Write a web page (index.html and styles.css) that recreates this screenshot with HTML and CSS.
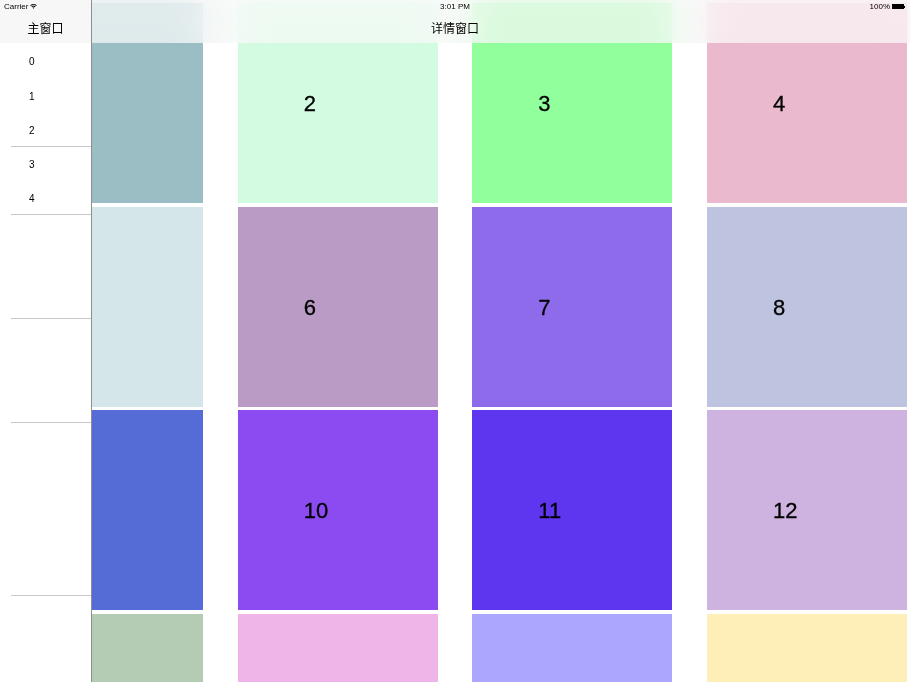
FILE: index.html
```html
<!doctype html>
<html lang="zh">
<head>
    <meta charset="utf-8" />
    <title>详情窗口</title>
    <link rel="stylesheet" href="styles.css">
</head>
<body>
    <div class="ipad">
        <div class="detail">
            <div class="grid">
                <div class="cell c1"></div>
                <div class="cell c2"><span>2</span></div>
                <div class="cell c3"><span>3</span></div>
                <div class="cell c4"><span>4</span></div>
                <div class="cell c5"></div>
                <div class="cell c6"><span>6</span></div>
                <div class="cell c7"><span>7</span></div>
                <div class="cell c8"><span>8</span></div>
                <div class="cell c9"></div>
                <div class="cell c10"><span>10</span></div>
                <div class="cell c11"><span>11</span></div>
                <div class="cell c12"><span>12</span></div>
                <div class="cell c13"></div>
                <div class="cell c14"></div>
                <div class="cell c15"></div>
                <div class="cell c16"></div>
            </div>
            <div class="detail-bar">
                <div class="status">
                    <span class="time">3:01 PM</span>
                    <span class="battery">100%<i class="cell-body"></i><i class="nub"></i></span>
                </div>
                <div class="title">详情窗口</div>
            </div>
        </div>

        <div class="master">
            <div class="master-bar">
                <div class="status">
                    <span class="carrier">Carrier</span>
                    <svg class="wifi" width="7" height="5" viewBox="0 0 7 5">
                        <path d="M0.2 1.4 A4.6 4.6 0 0 1 6.8 1.4 L6.1 2.1 A3.6 3.6 0 0 0 0.9 2.1 Z" fill="#000"/>
                        <path d="M1.4 2.6 A3 3 0 0 1 5.6 2.6 L4.9 3.3 A2 2 0 0 0 2.1 3.3 Z" fill="#000"/>
                        <path d="M2.6 3.8 A1.3 1.3 0 0 1 4.4 3.8 L3.5 4.8 Z" fill="#000"/>
                    </svg>
                </div>
                <div class="title">主窗口</div>
            </div>
            <ul class="list">
                <li class="r36">0</li>
                <li class="r34">1</li>
                <li class="r34 sep">2</li>
                <li class="r34">3</li>
                <li class="r34 sep">4</li>
                <li class="r104 sep"></li>
                <li class="r104 sep"></li>
                <li class="r173 sep"></li>
                <li class="r104"></li>
            </ul>
        </div>
    </div>
</body>
</html>
```

FILE: styles.css
```css
*{ padding:0; margin:0; list-style:none; border:0; box-sizing:border-box;}
body
{
    background:#fff;
    font-family:"Liberation Sans", Arial, "Noto Sans CJK SC", sans-serif;
    color:#000;
}
.ipad
{
    width:910px;
    height:682px;
    overflow:hidden;
    position:relative;
}

/* detail pane, runs under the master */
.detail
{
    width:910px;
    height:682px;
    overflow:hidden;
}
.grid
{
    display:grid;
    grid-template-columns:repeat(4, 200px);
    grid-auto-rows:200px;
    column-gap:34.67px;
    row-gap:3.5px;
    padding:3px 0 0 3px;
}
.cell
{
    display:flex;
    align-items:center;
    padding-left:66px;
    padding-top:2px;
    font-size:22px;
    -webkit-text-stroke:0.3px #000;
}
.c1 { background:#9bbec4; }
.c2 { background:#d3fbe1; }
.c3 { background:#90ff9c; }
.c4 { background:#ebb9cd; }
.c5 { background:#d5e6eb; }
.c6 { background:#b99bc5; }
.c7 { background:#8d6beb; }
.c8 { background:#bec4e0; }
.c9 { background:#556bd5; }
.c10 { background:#8c4bf1; }
.c11 { background:#5f36f0; }
.c12 { background:#ceb2e0; }
.c13 { background:#b4cbb4; }
.c14 { background:#efb4e8; }
.c15 { background:#aca6ff; }
.c16 { background:#feeeb8; }

.detail-bar
{
    position:absolute;
    left:0;
    top:0;
    width:910px;
    height:43px;
    background:rgba(248,248,248,0.74);
    backdrop-filter:blur(18px) saturate(1.3);
}
.status
{
    height:13px;
    font-size:8px;
    line-height:13px;
    position:relative;
}
.detail-bar .time
{
    display:block;
    text-align:center;
}
.battery
{
    position:absolute;
    right:5px;
    top:0;
    display:flex;
    align-items:center;
    height:13px;
}
.battery .cell-body
{
    display:block;
    width:12px;
    height:5px;
    margin-left:2px;
    background:#000;
}
.battery .nub
{
    display:block;
    width:1px;
    height:2px;
    background:#000;
}
.title
{
    height:30px;
    line-height:30px;
    text-align:center;
    font-family:"Noto Sans CJK SC", sans-serif;
    font-size:12px;
}

/* master pane on top */
.master
{
    position:absolute;
    left:0;
    top:0;
    width:92px;
    height:682px;
    background:#fff;
    border-right:1px solid #8e8e8e;
}
.master-bar
{
    height:43px;
    background:#f7f7f7;
}
.master-bar .status
{
    display:flex;
    align-items:center;
    padding-left:4px;
}
.wifi
{
    margin-left:2px;
}
.list li
{
    display:flex;
    align-items:center;
    padding-left:29px;
    font-size:10px;
    position:relative;
}
.list li.sep::after
{
    content:"";
    position:absolute;
    left:11px;
    right:0;
    bottom:0;
    height:1px;
    background:#c8c7cc;
}
.r36 { height:36px; }
.r34 { height:34px; }
.r104 { height:104px; }
.r173 { height:173px; }
```
